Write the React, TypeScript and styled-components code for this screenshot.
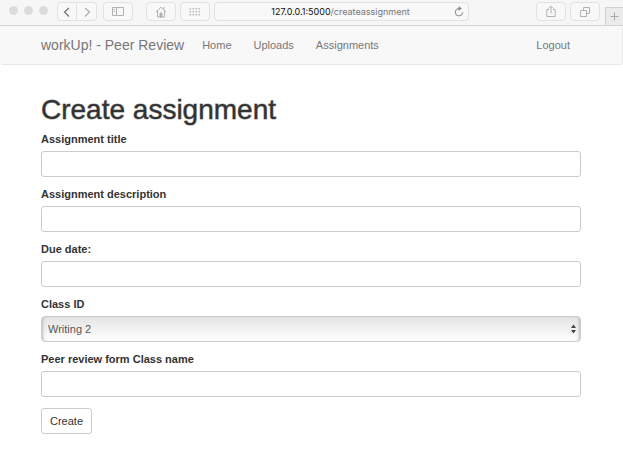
import React from "react";
import styled, { createGlobalStyle } from "styled-components";

const GlobalStyle = createGlobalStyle`
  *, *::before, *::after { box-sizing: border-box; }
  body {
    margin: 0;
    background: #fff;
    color: #333;
    font-family: "Liberation Sans", Arial, sans-serif;
    font-size: 11px;
    line-height: 16px;
  }
  button, input, select { font: inherit; }
`;

const Toolbar = styled.header`
  display: flex;
  align-items: flex-start;
  height: 26px;
  padding: 2px 0 0 9px;
  background: #f6f6f6;
  border-bottom: 1px solid #d2d2d2;
`;

const WindowDots = styled.div`
  display: flex;
  gap: 6px;
  margin: 4px 9px 0 0;
`;

const Dot = styled.span`
  width: 9px;
  height: 9px;
  border-radius: 50%;
  background: #dcdcdc;
`;

const ToolGroup = styled.div<{ $after: number }>`
  display: flex;
  gap: 4px;
  margin-right: ${(p) => p.$after}px;
`;

const ToolButton = styled.button<{ $width?: number }>`
  display: flex;
  align-items: center;
  justify-content: center;
  width: ${(p) => p.$width ?? 30}px;
  height: 19px;
  padding: 0;
  color: #b2b2b2;
  background: #f8f8f8;
  border: 1px solid #e2e2e2;
  border-radius: 4px;
`;

const HistoryGroup = styled(ToolGroup)`
  gap: 0;

  button:first-child { color: #777; border-radius: 4px 0 0 4px; }
  button:last-child { border-left: 0; border-radius: 0 4px 4px 0; }
`;

const AddressBar = styled.div`
  display: flex;
  flex: 1;
  align-items: center;
  height: 19px;
  margin-right: 67px;
  padding: 0 4px 0 12px;
  background: #f8f8f8;
  border: 1px solid #e2e2e2;
  border-radius: 4px;
`;

const Address = styled.div`
  flex: 1;
  color: #777;
  font-family: Inter, sans-serif;
  font-size: 9px;
  text-align: center;
  white-space: nowrap;
`;

const Host = styled.span`
  color: #111;
`;

const ReloadButton = styled.button`
  display: flex;
  padding: 0;
  color: #888;
  background: none;
  border: 0;
`;

const NewTabButton = styled.button`
  display: flex;
  align-items: center;
  justify-content: center;
  width: 18px;
  height: 18px;
  margin-top: 5px;
  padding: 0;
  color: #aaa;
  background: #ebebeb;
  border: 1px solid #d2d2d2;
  border-width: 1px 0 0 1px;
`;

const Navbar = styled.nav`
  display: flex;
  align-items: center;
  height: 39px;
  padding: 0 52px 0 41px;
  background: #f8f8f8;
  border: 1px solid #e7e7e7;
  border-width: 0 1px 1px 0;
  border-radius: 3px;
`;

const Brand = styled.a`
  margin-right: 18px;
  color: #777;
  font-size: 14px;
  text-decoration: none;
  white-space: nowrap;
`;

const NavLinks = styled.div`
  display: flex;
  flex: 1;
  gap: 22px;
`;

const NavLink = styled.a`
  color: #777;
  text-decoration: none;
`;

const Page = styled.main`
  padding: 28px 42px 16px 41px;
`;

const Title = styled.h1`
  margin: 0 0 6px;
  font-size: 28px;
  font-weight: 400;
  line-height: 33px;
  -webkit-text-stroke: 1px rgba(51, 51, 51, 0.5);
`;

const Field = styled.div`
  display: flex;
  flex-direction: column;
  gap: 4px;
  margin-bottom: 10px;
`;

const Label = styled.label`
  line-height: 15px;
  font-weight: 700;
`;

const TextInput = styled.input`
  width: 100%;
  height: 26px;
  padding: 4px 9px;
  color: #555;
  background: #fff;
  border: 1px solid #ccc;
  border-radius: 3px;
`;

const SelectBox = styled.div`
  display: grid;
  align-items: center;

  > * { grid-area: 1 / 1; }
  svg { justify-self: end; margin-right: 5px; pointer-events: none; }
`;

const Select = styled.select`
  width: 100%;
  height: 26px;
  padding: 0 16px 0 6px;
  color: #555;
  appearance: none;
  background: linear-gradient(#e4e4e4, #fff);
  border: 1px solid #ccc;
  border-radius: 4px;
  box-shadow: inset 3px 0 3px -2px #bbb, inset -3px 0 3px -2px #bbb;
`;

const SubmitButton = styled.button`
  height: 26px;
  margin-top: 1px;
  padding: 0 8px;
  color: #333;
  background: #fff;
  border: 1px solid #ccc;
  border-radius: 3px;
`;

const ChevronIcon = ({ right = false }: { right?: boolean }) => (
  <svg width="8" height="12" viewBox="0 0 8 12" fill="none" stroke="currentColor" strokeWidth="1.3">
    <path d={right ? "M2 2L6.5 6L2 10.5" : "M6 2L1.5 6L6 10.5"} />
  </svg>
);

const SidebarIcon = () => (
  <svg width="12" height="10" viewBox="0 0 12 10" fill="none" stroke="currentColor">
    <path d="M.5 .5H11.5V8.5H.5ZM4.5 .5V8.5M1.5 2.5H3M1.5 4.5H3" />
  </svg>
);

const HomeIcon = () => (
  <svg width="12" height="12" viewBox="0 0 12 12" fill="none" stroke="currentColor">
    <path d="M.8 6.2L6 1.2L11.2 6.2M2.5 5V11H9.5V5M9 1V3.5" />
    <path d="M5 11V7H7V11Z" fill="currentColor" />
  </svg>
);

const GridIcon = () => (
  <svg width="12" height="10" viewBox="0 0 12 10" fill="currentColor">
    {[0, 3, 6, 9].flatMap((x) =>
      [0, 3, 6].map((y) => <rect key={`${x}-${y}`} x={x + 0.5} y={y + 1} width="1.4" height="1.4" />)
    )}
  </svg>
);

const ReloadIcon = () => (
  <svg width="10" height="12" viewBox="0 0 10 12" fill="none" stroke="currentColor">
    <path d="M5.2 2.5A3.7 3.7 0 1 0 8.7 6.2" />
    <path d="M4.5 .2L7.8 2.6L4.5 5Z" fill="currentColor" stroke="none" />
  </svg>
);

const ShareIcon = () => (
  <svg width="10" height="13" viewBox="0 0 10 13" fill="none" stroke="currentColor">
    <path d="M3 4.5H.8V11.5H9.2V4.5H7M5 8.5V1.2M2.7 3.5L5 1.2L7.3 3.5" />
  </svg>
);

const TabsIcon = () => (
  <svg width="10" height="10" viewBox="0 0 10 10" fill="none" stroke="currentColor">
    <path d="M.5 3.5H6.5V9.5H.5ZM3.5 3.5V.5H9.5V6.5H6.5" />
  </svg>
);

const PlusIcon = () => (
  <svg width="9" height="9" viewBox="0 0 9 9" stroke="currentColor">
    <path d="M4.5 .5V8.5M.5 4.5H8.5" />
  </svg>
);

const StepperIcon = () => (
  <svg width="5" height="10" viewBox="0 0 5 10" fill="#444">
    <path d="M0 4L2.5 .5L5 4ZM0 6L2.5 9.5L5 6Z" />
  </svg>
);

const TextField = ({ id, label }: { id: string; label: string }) => (
  <Field>
    <Label htmlFor={id}>{label}</Label>
    <TextInput id={id} type="text" />
  </Field>
);

export default function App() {
  return (
    <>
      <GlobalStyle />
      <Toolbar>
        <WindowDots>
          <Dot />
          <Dot />
          <Dot />
        </WindowDots>
        <HistoryGroup $after={6}>
          <ToolButton $width={20} aria-label="Back"><ChevronIcon /></ToolButton>
          <ToolButton $width={20} aria-label="Forward"><ChevronIcon right /></ToolButton>
        </HistoryGroup>
        <ToolGroup $after={13}>
          <ToolButton aria-label="Sidebar"><SidebarIcon /></ToolButton>
        </ToolGroup>
        <ToolGroup $after={4}>
          <ToolButton aria-label="Home page"><HomeIcon /></ToolButton>
          <ToolButton aria-label="Top sites"><GridIcon /></ToolButton>
        </ToolGroup>
        <AddressBar>
          <Address><Host>127.0.0.1:5000</Host>/createassignment</Address>
          <ReloadButton aria-label="Reload"><ReloadIcon /></ReloadButton>
        </AddressBar>
        <ToolGroup $after={5}>
          <ToolButton aria-label="Share"><ShareIcon /></ToolButton>
          <ToolButton aria-label="Show tabs"><TabsIcon /></ToolButton>
        </ToolGroup>
        <NewTabButton aria-label="New tab"><PlusIcon /></NewTabButton>
      </Toolbar>
      <Navbar>
        <Brand href="#">workUp! - Peer Review</Brand>
        <NavLinks>
          <NavLink href="#">Home</NavLink>
          <NavLink href="#">Uploads</NavLink>
          <NavLink href="#">Assignments</NavLink>
        </NavLinks>
        <NavLink href="#">Logout</NavLink>
      </Navbar>
      <Page>
        <Title>Create assignment</Title>
        <form>
          <TextField id="title" label="Assignment title" />
          <TextField id="description" label="Assignment description" />
          <TextField id="due" label="Due date:" />
          <Field>
            <Label htmlFor="class-id">Class ID</Label>
            <SelectBox>
              <Select id="class-id">
                <option>Writing 2</option>
              </Select>
              <StepperIcon />
            </SelectBox>
          </Field>
          <TextField id="review-form" label="Peer review form Class name" />
          <SubmitButton type="button">Create</SubmitButton>
        </form>
      </Page>
    </>
  );
}
